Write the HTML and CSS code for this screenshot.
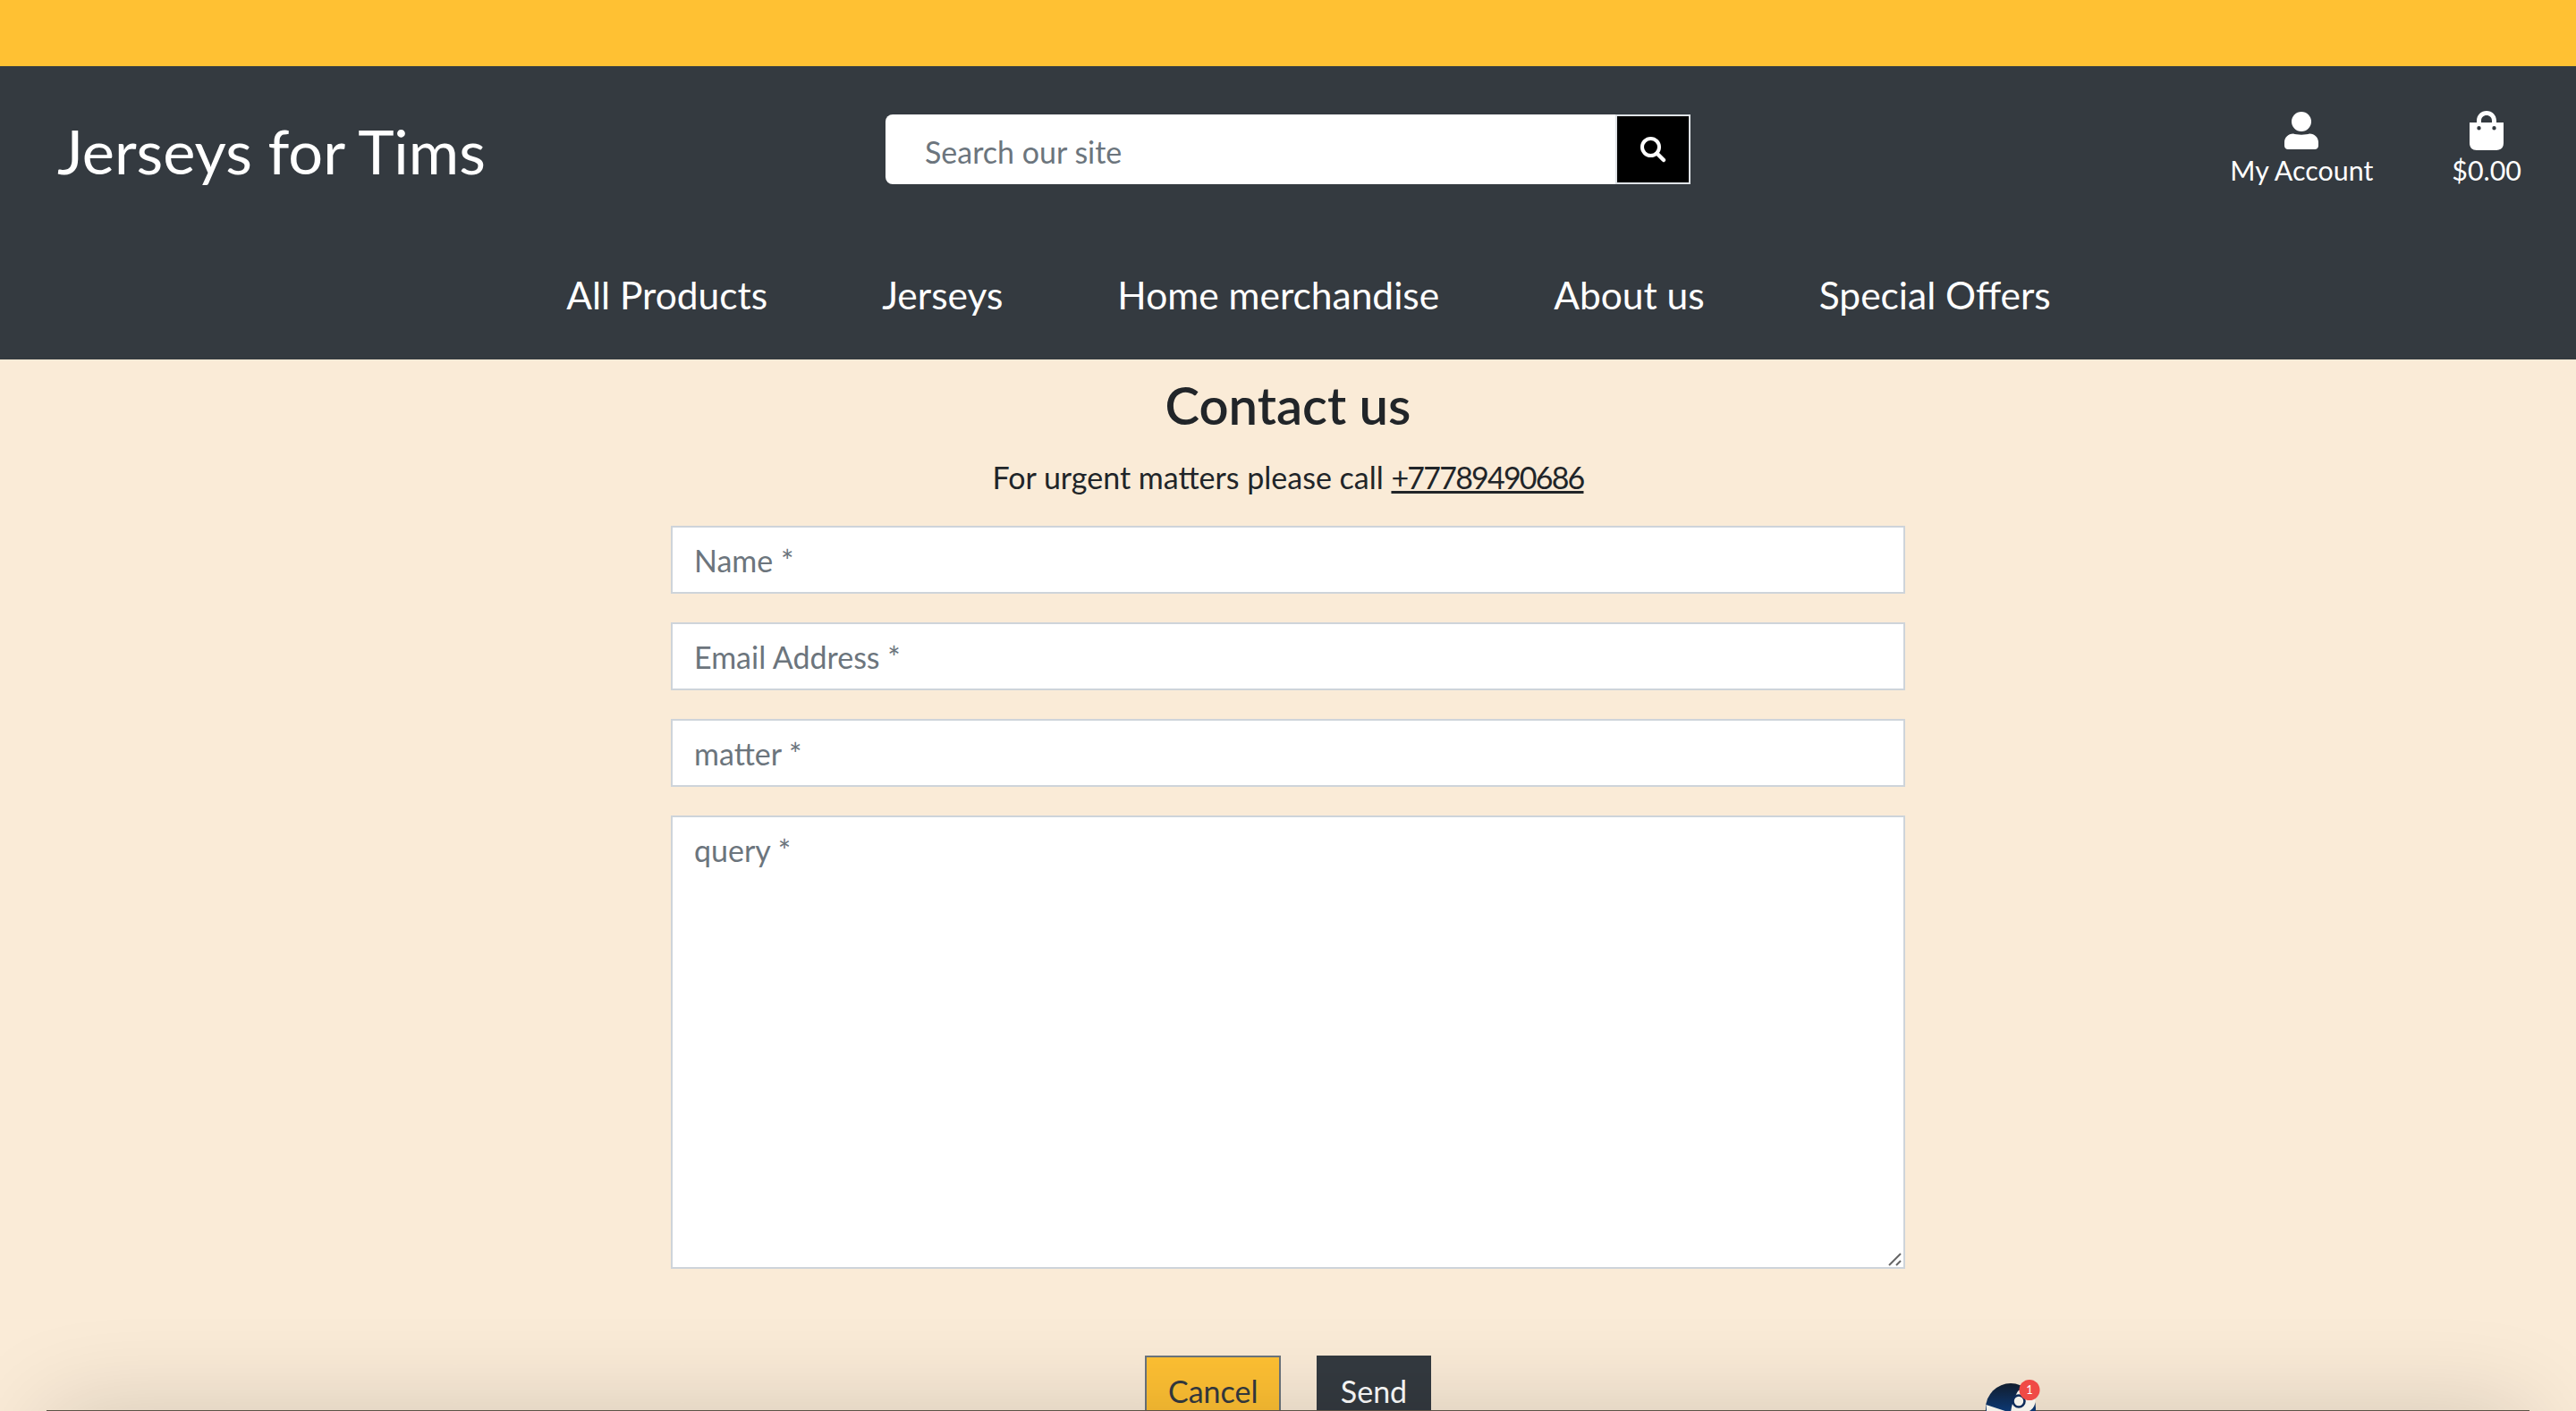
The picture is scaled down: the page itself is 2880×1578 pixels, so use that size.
FILE: index.html
```html
<!DOCTYPE html>
<html lang="en">
<head>
    <meta charset="UTF-8">
    <meta name="viewport" content="width=device-width, initial-scale=1.0">
    <title>Contact us - Jerseys for Tims</title>
    <link rel="stylesheet" href="styles.css">
</head>
<body>
    <div class="announcement"></div>

    <header class="site-header">
        <div class="header-top">
            <a class="logo" href="#">Jerseys for Tims</a>
            <form class="search">
                <input class="search-input" type="text" placeholder="Search our site">
                <button class="search-button" type="button" aria-label="Search">
                    <svg viewBox="0 0 32 32" width="32" height="32">
                        <circle cx="13.5" cy="13.5" r="9.5" fill="none" stroke="#fff" stroke-width="4"/>
                        <path d="M20.5 20.5 L28 28" stroke="#fff" stroke-width="4.5" stroke-linecap="round"/>
                    </svg>
                </button>
            </form>
            <div class="header-links">
                <a class="header-link" href="#">
                    <svg viewBox="0 0 38 42" width="38" height="42">
                        <circle cx="19" cy="11" r="11"/>
                        <path d="M10 24.5 C13 26 25 26 28 24.5 C34 24.5 38 29 38 34 V38 C38 40.5 36 42 34 42 H4 C2 42 0 40.5 0 38 V34 C0 29 4 24.5 10 24.5 Z"/>
                    </svg>
                    <span>My Account</span>
                </a>
                <a class="header-link" href="#">
                    <svg viewBox="0 0 38 44" width="38" height="44">
                        <path fill-rule="evenodd" d="M8 13 V11 C8 4.5 13 0 19 0 C25 0 30 4.5 30 11 V13 H38 V36 C38 41 35 44 30 44 H8 C3 44 0 41 0 36 V13 Z M13 13 H25 V11 C25 7.5 22.5 5 19 5 C15.5 5 13 7.5 13 11 Z M10.5 17 A2.2 2.2 0 1 0 10.5 21.4 A2.2 2.2 0 1 0 10.5 17 Z M27.5 17 A2.2 2.2 0 1 0 27.5 21.4 A2.2 2.2 0 1 0 27.5 17 Z"/>
                    </svg>
                    <span>$0.00</span>
                </a>
            </div>
        </div>
        <nav class="main-nav">
            <a href="#">All Products</a>
            <a href="#">Jerseys</a>
            <a href="#">Home merchandise</a>
            <a href="#">About us</a>
            <a href="#">Special Offers</a>
        </nav>
    </header>

    <main class="contact">
        <h1>Contact us</h1>
        <p class="contact-note">For urgent matters please call <a href="#">+77789490686</a></p>
        <form class="contact-form">
            <input class="field" type="text" placeholder="Name *">
            <input class="field" type="email" placeholder="Email Address *">
            <input class="field" type="text" placeholder="matter *">
            <div class="query-wrap">
                <textarea class="field field-query" placeholder="query *"></textarea>
                <svg class="resize-grip" viewBox="0 0 16 16" width="16" height="16">
                    <path d="M1 14 L14 1 M9 14 L14 9" stroke="#666" stroke-width="2"/>
                </svg>
            </div>
            <div class="contact-actions">
                <a class="btn btn-cancel" href="#">Cancel</a>
                <button class="btn btn-send" type="button">Send</button>
            </div>
        </form>
    </main>

    <!-- bottom edge of a window sitting just below the page -->
    <div class="window-edge"></div>

    <svg class="steam-icon" viewBox="0 0 80 80" width="80" height="80">
        <defs>
            <linearGradient id="steamBlue" x1="0" y1="0" x2="0" y2="1">
                <stop offset="0" stop-color="#111d2e"/>
                <stop offset="0.6" stop-color="#0c3a78"/>
            </linearGradient>
        </defs>
        <circle cx="28" cy="28" r="28" fill="url(#steamBlue)"/>
        <path d="M0.5 24 L28 33 C29 22 35 9 37 8 A13 13 0 1 1 38 32 L28 41 L2 42 Z" fill="#f3f1ea"/>
        <circle cx="37" cy="20" r="6.5" fill="none" stroke="#0f2c5a" stroke-width="2.6"/>
        <circle cx="49" cy="7.5" r="11.5" fill="#f04a46"/>
        <text x="49" y="11.5" class="steam-badge">1</text>
    </svg>
</body>
</html>
```

FILE: styles.css
```css
html, body {
    height: 100%;
    overflow: hidden;
}
body {
    position: relative;
    margin: 0;
    background: #faebd7;
    color: #212529;
    font-family: 'Lato', 'Noto Sans', sans-serif;
    font-size: 34px;
}
a {
    color: inherit;
    text-decoration: none;
}
.announcement {
    height: 74px;
    background: #ffc133;
}
.site-header {
    height: 328px;
    box-sizing: border-box;
    background: #343a40;
    color: #fff;
}
.header-top {
    display: grid;
    grid-template-columns: 1fr 900px 1fr;
    align-items: start;
    padding: 50px 62px 0;
}
.logo {
    font-size: 68.5px;
    line-height: 86px;
    margin: 2px 0 0 2px;
}
.search {
    display: flex;
    height: 78px;
    margin-top: 4px;
}
.search-input {
    flex: 1;
    min-width: 0;
    box-sizing: border-box;
    border: none;
    border-radius: 8px 0 0 8px;
    padding: 4px 44px 0;
    background: #fff;
    font: inherit;
    outline: none;
}
.search-input::placeholder {
    color: #6c757d;
    opacity: 1;
}
.search-button {
    width: 84px;
    box-sizing: border-box;
    border: 2px solid #dee2e6;
    padding: 0;
    background: #000;
    display: flex;
    align-items: center;
    justify-content: center;
}
.header-links {
    display: flex;
    justify-content: flex-end;
    gap: 88px;
    margin-right: -1px;
}
.header-link {
    display: flex;
    flex-direction: column;
    align-items: center;
    font-size: 30.4px;
    line-height: 44px;
}
.header-link svg {
    fill: #fff;
    height: 44px;
}
.main-nav {
    display: flex;
    justify-content: center;
    gap: 128px;
    padding-left: 46px;
    margin-top: 90px;
    font-size: 42.5px;
    line-height: 56px;
}
.contact {
    width: 1380px;
    margin: 0 auto;
    text-align: center;
}
.contact h1 {
    margin: 0;
    padding-top: 16px;
    font-size: 58px;
    line-height: 70px;
    font-weight: 600;
}
.contact-note {
    margin: 24px 0 0;
    line-height: 44px;
}
.contact-note a {
    text-decoration: underline;
    letter-spacing: -1.8px;
}
.contact-form {
    display: flex;
    flex-direction: column;
    gap: 32px;
    margin-top: 32px;
}
.field {
    display: block;
    box-sizing: border-box;
    width: 100%;
    height: 76px;
    border: 2px solid #ced4da;
    padding: 0 24px;
    background: #fff;
    font: inherit;
    color: #212529;
    outline: none;
}
.field::placeholder {
    color: #6c757d;
    opacity: 1;
}
.query-wrap {
    position: relative;
}
.field-query {
    height: 507px;
    padding-top: 16px;
    resize: none;
}
.resize-grip {
    position: absolute;
    right: 3px;
    bottom: 2px;
}
.contact-actions {
    display: flex;
    justify-content: center;
    gap: 40px;
    margin-top: 65px;
}
.btn {
    box-sizing: border-box;
    height: 88px;
    border: 2px solid transparent;
    padding: 8px 24px 16px;
    font: inherit;
    line-height: 60px;
}
.btn-cancel {
    width: 152px;
    background: #ffc133;
    border-color: #6c757d;
    color: #343a40;
}
.btn-send {
    width: 128px;
    background: #343a40;
    color: #fff;
}
.window-edge {
    position: absolute;
    top: 1577px;
    left: 52px;
    width: 2776px;
    height: 200px;
    background: #5c5346;
    box-shadow: 0 0 110px rgba(0, 0, 0, 0.16);
}
.steam-icon {
    position: absolute;
    top: 1547px;
    left: 2220px;
    overflow: visible;
}
.steam-badge {
    fill: #fff;
    font-size: 13px;
    text-anchor: middle;
}
```
